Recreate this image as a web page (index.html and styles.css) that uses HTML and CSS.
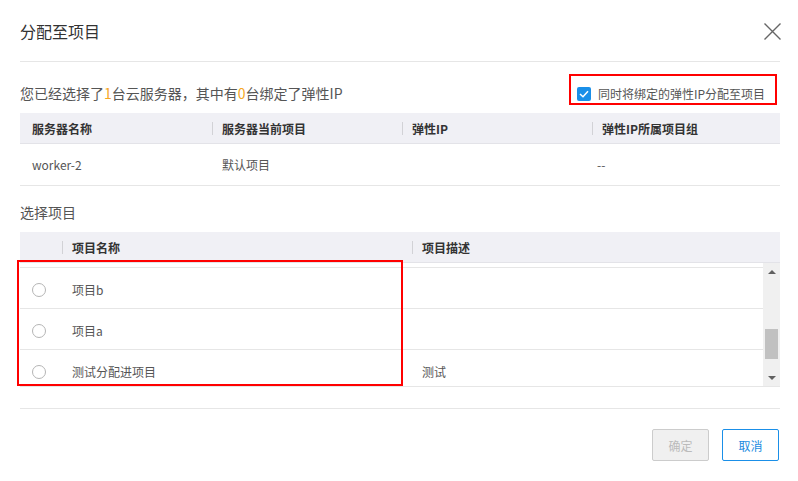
FILE: index.html
```html
<!DOCTYPE html>
<html lang="zh-CN">
<head>
<meta charset="utf-8">
<title>分配至项目</title>
<link rel="stylesheet" href="styles.css">
</head>
<body>
<div class="dialog">
  <header class="dlg-head">
    <h1 class="dlg-title">分配至项目</h1>
    <button class="dlg-close" aria-label="关闭">
      <svg width="17" height="17" viewBox="0 0 17 17"><path d="M0.5 0.5 L16.5 16.5 M16.5 0.5 L0.5 16.5" stroke="#666" stroke-width="1.4" fill="none"/></svg>
    </button>
  </header>

  <div class="info">
    <p class="info-text">您已经选择了<em>1</em>台云服务器，其中有<em>0</em>台绑定了弹性IP</p>
    <label class="also-assign">
      <span class="cbx"><svg width="10" height="8" viewBox="0 0 10 8"><path d="M1 4 L4 6.8 L9 1.2" stroke="#fff" stroke-width="1.5" fill="none"/></svg></span>
      <span class="cbx-label">同时将绑定的弹性IP分配至项目</span>
    </label>
  </div>

  <div class="srv-tbl">
    <div class="srv-row th">
      <div class="td">服务器名称</div>
      <div class="td">服务器当前项目</div>
      <div class="td">弹性IP</div>
      <div class="td">弹性IP所属项目组</div>
    </div>
    <div class="srv-row">
      <div class="td">worker-2</div>
      <div class="td">默认项目</div>
      <div class="td"></div>
      <div class="td dash">--</div>
    </div>
  </div>

  <h2 class="sec-title">选择项目</h2>

  <div class="proj-tbl">
    <div class="proj-row th">
      <div class="td"></div>
      <div class="td">项目名称</div>
      <div class="td">项目描述</div>
    </div>
    <div class="proj-body">
      <div class="proj-scroll">
        <div class="proj-list">
          <div class="proj-row row-cut"></div>
          <div class="proj-row"><div class="td"><span class="radio"></span></div><div class="td">项目b</div><div class="td"></div></div>
          <div class="proj-row"><div class="td"><span class="radio"></span></div><div class="td">项目a</div><div class="td"></div></div>
          <div class="proj-row"><div class="td"><span class="radio"></span></div><div class="td">测试分配进项目</div><div class="td">测试</div></div>
        </div>
      </div>
      <div class="vscroll">
        <span class="arr up"></span>
        <span class="track"><span class="thumb"></span></span>
        <span class="arr down"></span>
      </div>
    </div>
    <div class="pick-mark"></div>
  </div>

  <footer class="dlg-foot">
    <button class="btn btn-ok" disabled>确定</button>
    <button class="btn btn-cancel">取消</button>
  </footer>
</div>
</body>
</html>
```

FILE: styles.css
```css
* { box-sizing: border-box; margin: 0; padding: 0; }

html, body {
  width: 798px;
  height: 481px;
  overflow: hidden;
  background: #fff;
}

body {
  font-family: "Noto Sans CJK SC", "Microsoft YaHei", sans-serif;
  color: #555;
  font-size: 12px;
}

.dialog {
  padding: 0 18px 0 20px;
}

/* header */
.dlg-head {
  height: 62px;
  border-bottom: 1px solid #e6e6e6;
  display: flex;
  align-items: center;
  justify-content: space-between;
}
.dlg-title {
  font-size: 16px;
  font-weight: normal;
  color: #333;
  line-height: 22px;
}
.dlg-close {
  width: 17px;
  height: 17px;
  border: 0;
  background: none;
  display: block;
  margin-right: -1px;
  margin-top: 1px;
}
.dlg-close svg { display: block; }

/* info line */
.info {
  height: 51px;
  display: flex;
  justify-content: space-between;
  align-items: flex-end;
  padding-bottom: 8px;
}
.info-text {
  font-size: 14px;
  line-height: 20px;
  margin-bottom: 2px;
  color: #555;
}
.info-text em {
  font-style: normal;
  color: #f5a623;
}
.also-assign {
  display: flex;
  align-items: center;
  height: 31px;
  border: 2px solid #ff0000;
  padding: 9px 10px 1px 6px;
  margin-right: 3px;
  font-size: 12px;
  color: #555;
}
.cbx {
  width: 14px;
  height: 14px;
  border-radius: 2px;
  background: #1a8fe8;
  display: flex;
  align-items: center;
  justify-content: center;
  margin-right: 7px;
}
.cbx svg { display: block; }
.cbx-label { line-height: 17px; }

/* server table */
.srv-row {
  display: grid;
  grid-template-columns: 192px 190px 190px 1fr;
  align-items: center;
  height: 42px;
  border-bottom: 1px solid #e6e6e6;
}
.srv-row .td { padding-left: 10px; line-height: 16px; }
.srv-row .td:first-child { padding-left: 12px; }

.th {
  background: #f0f0f5;
  border-bottom: 1px solid #e3e3e8;
  font-weight: bold;
  color: #333;
}
.srv-row.th { height: 31px; }
.th .td { line-height: 13px; }
.th .td + .td { border-left: 1px solid #d2d2d6; padding-left: 9px; }

.dash { padding-left: 5px !important; }

.sec-title {
  font-size: 14px;
  font-weight: normal;
  line-height: 20px;
  color: #555;
  margin: 16px 0 10px;
}

/* project table */
.proj-tbl { position: relative; }
.proj-row {
  display: grid;
  grid-template-columns: 42px 350px 1fr;
  align-items: center;
  height: 41px;
  padding-top: 4px;
  border-bottom: 1px solid #e6e6e6;
}
.proj-row.th {
  height: 31px;
  padding-top: 0;
  border-bottom: 1px solid #e3e3e8;
}
.proj-row .td { padding-left: 10px; line-height: 16px; }
.proj-row .td:first-child { padding-left: 12px; }
.proj-row.th .td { line-height: 13px; }
.proj-row.th .td:first-child { height: 13px; }

.proj-body {
  display: flex;
  height: 124px;
  border-bottom: 1px solid #e6e6e6;
}
.proj-scroll {
  flex: 1;
  overflow: hidden;
}
/* list scrolled so only the tail of the previous row shows */
.proj-list { margin-top: -36px; }

.radio {
  display: block;
  width: 14px;
  height: 14px;
  border: 1px solid #b5b5b5;
  border-radius: 50%;
  background: #fff;
}

.vscroll {
  width: 17px;
  background: #f0f0f0;
  display: flex;
  flex-direction: column;
}
.arr {
  height: 17px;
  display: flex;
  align-items: center;
  justify-content: center;
}
.arr::before {
  content: "";
  width: 0;
  height: 0;
  border-left: 4px solid transparent;
  border-right: 4px solid transparent;
}
.arr.up::before { border-bottom: 4px solid #606060; }
.arr.down::before { border-top: 4px solid #606060; }
.track { flex: 1; display: block; }
.thumb {
  display: block;
  width: 13px;
  height: 30px;
  margin: 49px 2px 0;
  background: #c1c1c1;
}

.pick-mark {
  position: absolute;
  left: -3px;
  top: 28px;
  width: 386px;
  height: 126px;
  border: 2px solid #ff0000;
  pointer-events: none;
}

/* footer */
.dlg-foot {
  margin-top: 21px;
  border-top: 1px solid #e6e6e6;
  padding-top: 20px;
  display: flex;
  justify-content: flex-end;
  gap: 13px;
  padding-right: 1px;
}
.btn {
  width: 57px;
  height: 32px;
  border-radius: 2px;
  font-family: inherit;
  font-size: 12px;
  background: #fff;
}
.btn-ok {
  background: #f0f0f0;
  border: 1px solid #cccccc;
  color: #bbbbbb;
}
.btn-cancel {
  border: 1px solid #1a8fe8;
  color: #1a8be0;
}
```
